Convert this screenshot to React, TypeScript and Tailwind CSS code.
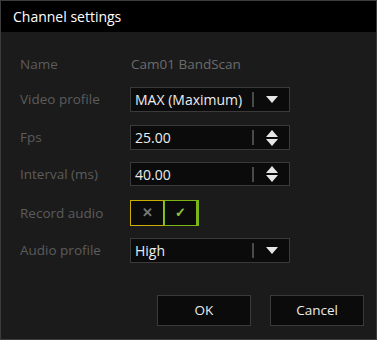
import { useState } from 'react'

const font = { fontFamily: '"Open Sans", "Noto Sans", sans-serif' }

function Caret({ dir = 'down' }: { dir?: 'up' | 'down' }) {
  return (
    <svg width="12" height="7" viewBox="0 0 12 7" className="block">
      {dir === 'down' ? <path d="M0 0h12L6 7z" fill="#e6e6e6" /> : <path d="M0 7h12L6 0z" fill="#e6e6e6" />}
    </svg>
  )
}

function Field({ value, spin, h = 'h-[25px]' }: { value: string; spin?: boolean; h?: string }) {
  return (
    <div className={`flex ${h} w-[160px] items-center border border-[#3a3a3a] bg-[#0b0b0b]`}>
      <span className="flex-1 truncate pl-[4px] text-[14px] font-medium text-[#ececec]">{value}</span>
      <div className="h-[15px] w-[2px] bg-[#4a4a4a]" />
      <div className="flex w-[35px] flex-col items-center justify-center gap-[2px]">
        {spin ? (
          <>
            <Caret dir="up" />
            <Caret dir="down" />
          </>
        ) : (
          <Caret />
        )}
      </div>
    </div>
  )
}

function Row({ label, children, className = '' }: { label: string; children: React.ReactNode; className?: string }) {
  return (
    <div className={`flex items-center ${className}`}>
      <span className="w-[129px] shrink-0 pl-[19px] text-[13.5px] text-[#5c5c5c]">{label}</span>
      {children}
    </div>
  )
}

export default function App() {
  const [audio, setAudio] = useState(true)

  return (
    <div style={font} className="flex h-[340px] w-[377px] flex-col border border-[#3c3c3c] bg-[#1b1b1b]">
      <div className="flex h-[31px] items-center bg-black pl-[12px] text-[14px] text-white">Channel settings</div>

      <div className="flex flex-col pt-[20px]">
        <Row label="Name" className="h-[24px]">
          <span className="pl-[1px] text-[13.5px] text-[#6b6b6b]">Cam01 BandScan</span>
        </Row>
        <Row label="Video profile" className="mt-[11px]">
          <Field value="MAX (Maximum)" />
        </Row>
        <Row label="Fps" className="mt-[13px]">
          <Field value="25.00" spin />
        </Row>
        <Row label="Interval (ms)" className="mt-[12px]">
          <Field value="40.00" spin h="h-[24px]" />
        </Row>
        <Row label="Record audio" className="mt-[14px]">
          <div className="flex h-[26px]">
            <button
              onClick={() => setAudio(false)}
              className="flex w-[34px] items-center justify-center border border-[#c9b000] bg-[#0b0b0b] text-[13px] font-bold text-[#777]"
            >
              ✕
            </button>
            <button
              onClick={() => setAudio(true)}
              className="flex w-[35px] items-center justify-center border border-r-[3px] border-[#7cb518] bg-[#0b0b0b] text-[13px] font-bold text-[#8cc63f]"
            >
              {audio ? '✓' : ''}
            </button>
          </div>
        </Row>
        <Row label="Audio profile" className="mt-[12px]">
          <Field value="High" />
        </Row>
      </div>

      <div className="mt-auto flex justify-end gap-[19px] pb-[13px] pr-[12px]">
        <button className="h-[31px] w-[94px] border border-[#3a3a3a] bg-[#0b0b0b] text-[13.5px] text-[#ececec]">OK</button>
        <button className="h-[31px] w-[94px] border border-[#3a3a3a] bg-[#0b0b0b] text-[13.5px] text-[#ececec]">Cancel</button>
      </div>
    </div>
  )
}
